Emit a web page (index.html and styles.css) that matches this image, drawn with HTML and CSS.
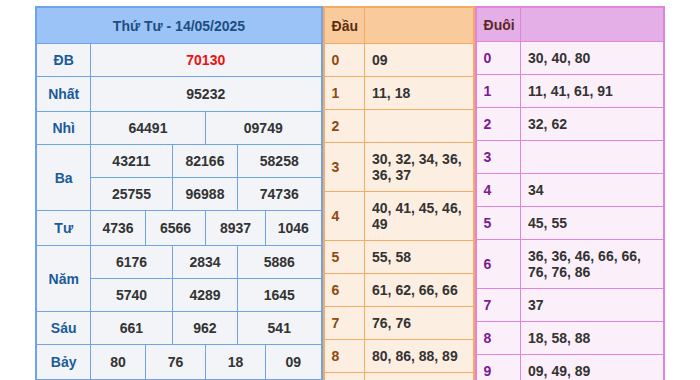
FILE: index.html
```html
<!DOCTYPE html>
<html>
<head>
    <meta charset="UTF-8">
    <title>Kết quả xổ số - Thứ Tư 14/05/2025</title>
    <link rel="stylesheet" href="styles.css">
</head>
<body>
    <div class="board">
        <table class="prize">
            <colgroup>
                <col class="w-label">
                <col class="w-a">
                <col class="w-b">
                <col class="w-c">
                <col class="w-d">
                <col class="w-e">
                <col class="w-f">
            </colgroup>
            <tr class="head">
                <th colspan="7">Thứ Tư - 14/05/2025</th>
            </tr>
            <tr>
                <td class="name">ĐB</td>
                <td colspan="6" class="special">70130</td>
            </tr>
            <tr class="tall">
                <td class="name">Nhất</td>
                <td colspan="6">95232</td>
            </tr>
            <tr>
                <td class="name">Nhì</td>
                <td colspan="3">64491</td>
                <td colspan="3">09749</td>
            </tr>
            <tr>
                <td class="name" rowspan="2">Ba</td>
                <td colspan="2">43211</td>
                <td colspan="2">82166</td>
                <td colspan="2">58258</td>
            </tr>
            <tr>
                <td colspan="2">25755</td>
                <td colspan="2">96988</td>
                <td colspan="2">74736</td>
            </tr>
            <tr class="tall">
                <td class="name">Tư</td>
                <td>4736</td>
                <td colspan="2">6566</td>
                <td colspan="2">8937</td>
                <td>1046</td>
            </tr>
            <tr>
                <td class="name" rowspan="2">Năm</td>
                <td colspan="2">6176</td>
                <td colspan="2">2834</td>
                <td colspan="2">5886</td>
            </tr>
            <tr>
                <td colspan="2">5740</td>
                <td colspan="2">4289</td>
                <td colspan="2">1645</td>
            </tr>
            <tr>
                <td class="name">Sáu</td>
                <td colspan="2">661</td>
                <td colspan="2">962</td>
                <td colspan="2">541</td>
            </tr>
            <tr class="tall">
                <td class="name">Bảy</td>
                <td>80</td>
                <td colspan="2">76</td>
                <td colspan="2">18</td>
                <td>09</td>
            </tr>
        </table>

        <table class="loto head-table">
            <colgroup>
                <col class="w-key">
                <col>
            </colgroup>
            <tr class="head">
                <th>Đầu</th>
                <th></th>
            </tr>
            <tr><td class="key">0</td><td>09</td></tr>
            <tr><td class="key">1</td><td>11, 18</td></tr>
            <tr><td class="key">2</td><td></td></tr>
            <tr><td class="key">3</td><td>30, 32, 34, 36, 36, 37</td></tr>
            <tr><td class="key">4</td><td>40, 41, 45, 46, 49</td></tr>
            <tr><td class="key">5</td><td>55, 58</td></tr>
            <tr><td class="key">6</td><td>61, 62, 66, 66</td></tr>
            <tr><td class="key">7</td><td>76, 76</td></tr>
            <tr><td class="key">8</td><td>80, 86, 88, 89</td></tr>
            <tr><td class="key">9</td><td>91</td></tr>
        </table>

        <table class="loto tail-table">
            <colgroup>
                <col class="w-key">
                <col>
            </colgroup>
            <tr class="head">
                <th>Đuôi</th>
                <th></th>
            </tr>
            <tr><td class="key">0</td><td>30, 40, 80</td></tr>
            <tr><td class="key">1</td><td>11, 41, 61, 91</td></tr>
            <tr><td class="key">2</td><td>32, 62</td></tr>
            <tr><td class="key">3</td><td></td></tr>
            <tr><td class="key">4</td><td>34</td></tr>
            <tr><td class="key">5</td><td>45, 55</td></tr>
            <tr><td class="key">6</td><td>36, 36, 46, 66, 66, 76, 76, 86</td></tr>
            <tr><td class="key">7</td><td>37</td></tr>
            <tr><td class="key">8</td><td>18, 58, 88</td></tr>
            <tr><td class="key">9</td><td>09, 49, 89</td></tr>
        </table>
    </div>
</body>
</html>
```

FILE: styles.css
```css
html, body {
    margin: 0;
    padding: 0;
    overflow: hidden;
    background-color: #ffffff;
    font-family: "Liberation Sans", Arial, sans-serif;
}

.board {
    display: flex;
    justify-content: center;
    align-items: flex-start;
    padding-top: 6px;
}

table {
    border-collapse: collapse;
    table-layout: fixed;
    font-size: 14px;
    font-weight: bold;
    line-height: 16px;
}

th, td {
    padding: 8px 7px;
}

/* Bảng giải thưởng */
.prize {
    width: 285px;
    border: 2px solid #6fa3ea;
}

.prize td,
.prize th {
    border: 1px solid #6fa3ea;
    text-align: center;
    color: #333333;
    background-color: #f2f4f8;
    padding: 8px 2px;
}

.prize .head th {
    background-color: #9cc3f7;
    color: #1c4f7f;
    padding: 10px 2px 9px;
}

.prize .tall td {
    padding-top: 9px;
    padding-bottom: 9px;
}

.prize td.name {
    color: #1a5b98;
}

.prize td.special {
    color: #ee1111;
}

.w-label { width: 54px; }
.w-a { width: 55px; }
.w-b { width: 27px; }
.w-c { width: 33px; }
.w-d { width: 32px; }
.w-e { width: 28px; }
.w-f { width: 56px; }

/* Bảng lô tô đầu / đuôi */
.loto td,
.loto th {
    text-align: left;
    color: #333333;
}

.head-table {
    width: 152px;
    border: 2px solid #f4ab63;
}

.head-table .w-key { width: 41px; }

.head-table td,
.head-table th {
    border: 1px solid #f4ab63;
    background-color: #fdeee2;
}

.head-table .head th {
    background-color: #f9ca9c;
    color: #5a2e10;
    padding: 10px 7px 9px;
}

.head-table td.key {
    color: #8e4a0e;
}

.tail-table {
    width: 190px;
    border: 2px solid #e483de;
}

.tail-table .w-key { width: 45px; }

.tail-table td,
.tail-table th {
    border: 1px solid #e483de;
    background-color: #fbf0fa;
}

.tail-table .head th {
    background-color: #e4aee6;
    color: #5a2a22;
    padding: 9px 7px 8px;
}

.tail-table td.key {
    color: #7a1a92;
}
```
